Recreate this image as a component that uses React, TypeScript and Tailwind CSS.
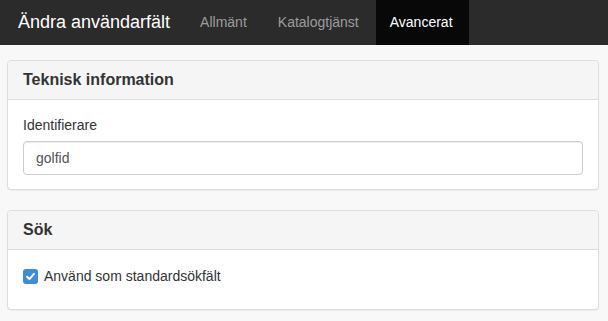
import React from 'react';

const font = { fontFamily: '"Liberation Sans", Arial, sans-serif' };

const Panel: React.FC<{ title: string; children: React.ReactNode }> = ({ title, children }) => (
    <section className="ml-[7px] mr-[9px] bg-white border border-[#dddddd] rounded-[4px] shadow-[0_1px_1px_rgba(0,0,0,0.05)]">
        <div className="h-[39px] px-[15px] flex items-center bg-[#f5f5f5] border-b border-[#dddddd] rounded-t-[4px]">
            <h3 className="text-[16px] font-bold text-[#333333]">{title}</h3>
        </div>
        <div className="px-[15px]">{children}</div>
    </section>
);

export default function App() {
    return (
        <div className="min-h-screen bg-[#f8f8f8] text-[#333333]" style={font}>
            <nav className="h-[45px] bg-[#2b2b2b] flex items-stretch">
                <span className="pl-[18px] pr-[15px] flex items-center text-[18px] text-white">Ändra användarfält</span>
                <a className="px-[15px] flex items-center text-[14px] text-[#9d9d9d]">Allmänt</a>
                <a className="pl-[16px] pr-[17px] flex items-center text-[14px] text-[#9d9d9d]">Katalogtjänst</a>
                <a className="px-[14px] w-[93px] flex items-center text-[14px] text-white bg-[#080808]">Avancerat</a>
            </nav>

            <div className="pt-[15px]">
                <Panel title="Teknisk information">
                    <div className="pt-[15px] pb-[14px]">
                        <label className="block text-[14px] mb-[6px] leading-[20px]">Identifierare</label>
                        <input
                            defaultValue="golfid"
                            className="w-full h-[34px] px-[12px] text-[14px] text-[#555555] bg-white border border-[#cccccc] rounded-[4px] shadow-[inset_0_1px_1px_rgba(0,0,0,0.075)] outline-none"
                            style={font}
                        />
                    </div>
                </Panel>

                <div className="h-[20px]" />

                <Panel title="Sök">
                    <div className="pt-[16px] pb-[23px] flex items-center gap-[6px]">
                        <span className="w-[15px] h-[15px] rounded-[3px] bg-[#3b8ede] flex items-center justify-center">
                            <svg width="11" height="11" viewBox="0 0 12 12" fill="none">
                                <path d="M2.2 6.3 4.8 8.8 9.8 3.2" stroke="white" strokeWidth="2.2" strokeLinecap="round" strokeLinejoin="round" />
                            </svg>
                        </span>
                        <span className="text-[14px] leading-[20px]">Använd som standardsökfält</span>
                    </div>
                </Panel>
            </div>
        </div>
    );
}
